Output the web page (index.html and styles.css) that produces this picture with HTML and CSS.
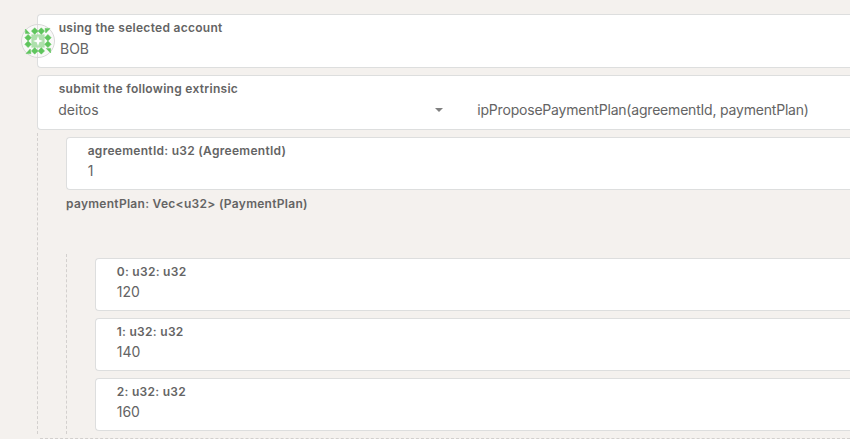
FILE: index.html
```
<!DOCTYPE html>
<html lang="en">
<head>
<meta charset="utf-8">
<title>Extrinsics</title>
<link rel="stylesheet" href="styles.css">
</head>
<body>
<main class="form">
  <section class="field account">
    <svg class="identicon" viewBox="0 0 34 34" aria-hidden="true">
      <circle cx="17" cy="17" r="16.5" fill="#f9f9f8" stroke="#d9d8d8"/>
      <path d="M16.5 1v32" stroke="#dedede"/>
      <path d="M10.4 10.4h13.2v13.2H10.4z" fill="#aee0ac"/>
      <path d="M17 12l1.3 3.7L22 17l-3.7 1.3L17 22l-1.3-3.7L12 17l3.7-1.3z" fill="#fff"/>
      <g fill="#5fc55d" stroke="#5fc55d" stroke-width=".5">
        <path d="M13.7 3.8L17 7.1l3.3-3.3 3.3 3.3-3.3 3.3L17 7.1l-3.3 3.3-3.3-3.3zM13.7 23.6l3.3 3.3 3.3-3.3 3.3 3.3-3.3 3.3-3.3-3.3-3.3 3.3-3.3-3.3zM7.1 10.4l3.3 3.3L7.1 17l3.3 3.3-3.3 3.3-3.3-3.3L7.1 17l-3.3-3.3zM26.9 10.4l3.3 3.3-3.3 3.3 3.3 3.3-3.3 3.3-3.3-3.3 3.3-3.3-3.3-3.3z"/>
        <path d="M4.4 5v4.6h4.4zM24 4.4h5L24.8 9zM29.6 29v-4.6h-4.4zM10 29.6H5L9.2 25z"/>
      </g>
    </svg>
    <span class="label">using the selected account</span>
    <span class="value name">BOB</span>
  </section>
  <section class="field extrinsic">
    <span class="label">submit the following extrinsic</span>
    <div class="selects">
      <span class="value module">deitos<i class="caret"></i></span>
      <span class="value call">ipProposePaymentPlan(agreementId, paymentPlan)</span>
    </div>
  </section>
  <div class="params">
    <section class="field">
      <span class="label">agreementId: u32 (AgreementId)</span>
      <span class="value">1</span>
    </section>
    <h2 class="label heading">paymentPlan: Vec&lt;u32&gt; (PaymentPlan)</h2>
    <div class="items">
      <section class="field"><span class="label">0: u32: u32</span><span class="value">120</span></section>
      <section class="field"><span class="label">1: u32: u32</span><span class="value">140</span></section>
      <section class="field"><span class="label">2: u32: u32</span><span class="value">160</span></section>
    </div>
  </div>
  <div class="divider"></div>
</main>
</body>
</html>
```

FILE: styles.css
```
* { box-sizing: border-box; }
body {
  margin: 0;
  height: 439px;
  overflow: hidden;
  background: #f4f1ee;
  color: #646464;
  font-family: Inter, "Liberation Sans", sans-serif;
}
.form { padding: 14px 0 0 37px; }
.field {
  position: relative;
  display: flex;
  flex-direction: column;
  height: 53px;
  padding: 5px 0 0 20.7px;
  background: #fff;
  border: 1px solid #dddede;
  border-right: 0;
  border-radius: 4px 0 0 4px;
}
.account { height: 54px; margin-bottom: 7px; }
.extrinsic { height: 55px; }
.label {
  font-size: 12px;
  font-weight: 600;
  line-height: 16px;
  letter-spacing: 0.29px;
  white-space: nowrap;
}
.value {
  font-size: 14px;
  line-height: 20px;
  margin-top: 2px;
  white-space: nowrap;
}
.account .value, .extrinsic .value { margin-top: 3px; }
.name { padding-left: 1.3px; }
.identicon {
  position: absolute;
  left: -17px;
  top: 9px;
  width: 34px;
  height: 34px;
}
.selects { display: flex; margin-left: -0.4px; }
.call { letter-spacing: -0.2px; }
.module {
  display: flex;
  align-items: center;
  justify-content: space-between;
  width: 385px;
  margin-right: 34px;
}
.caret {
  margin-top: -1px;
  border: 4px solid transparent;
  border-top-color: #808080;
  border-bottom: 0;
}
.params {
  height: 301px;
  margin-top: 3px;
  padding: 4px 0 0 28px;
  border-left: 1px dashed #d3d0ce;
}
.heading { margin: 6px 0 42px; }
.items {
  display: flex;
  flex-direction: column;
  gap: 7px;
  height: 180px;
  padding: 4px 0 0 28px;
  border-left: 1px dashed #d3d0ce;
}
.divider { margin: 4px 0 0 3px; border-top: 1px dashed #d3d0ce; }
```
